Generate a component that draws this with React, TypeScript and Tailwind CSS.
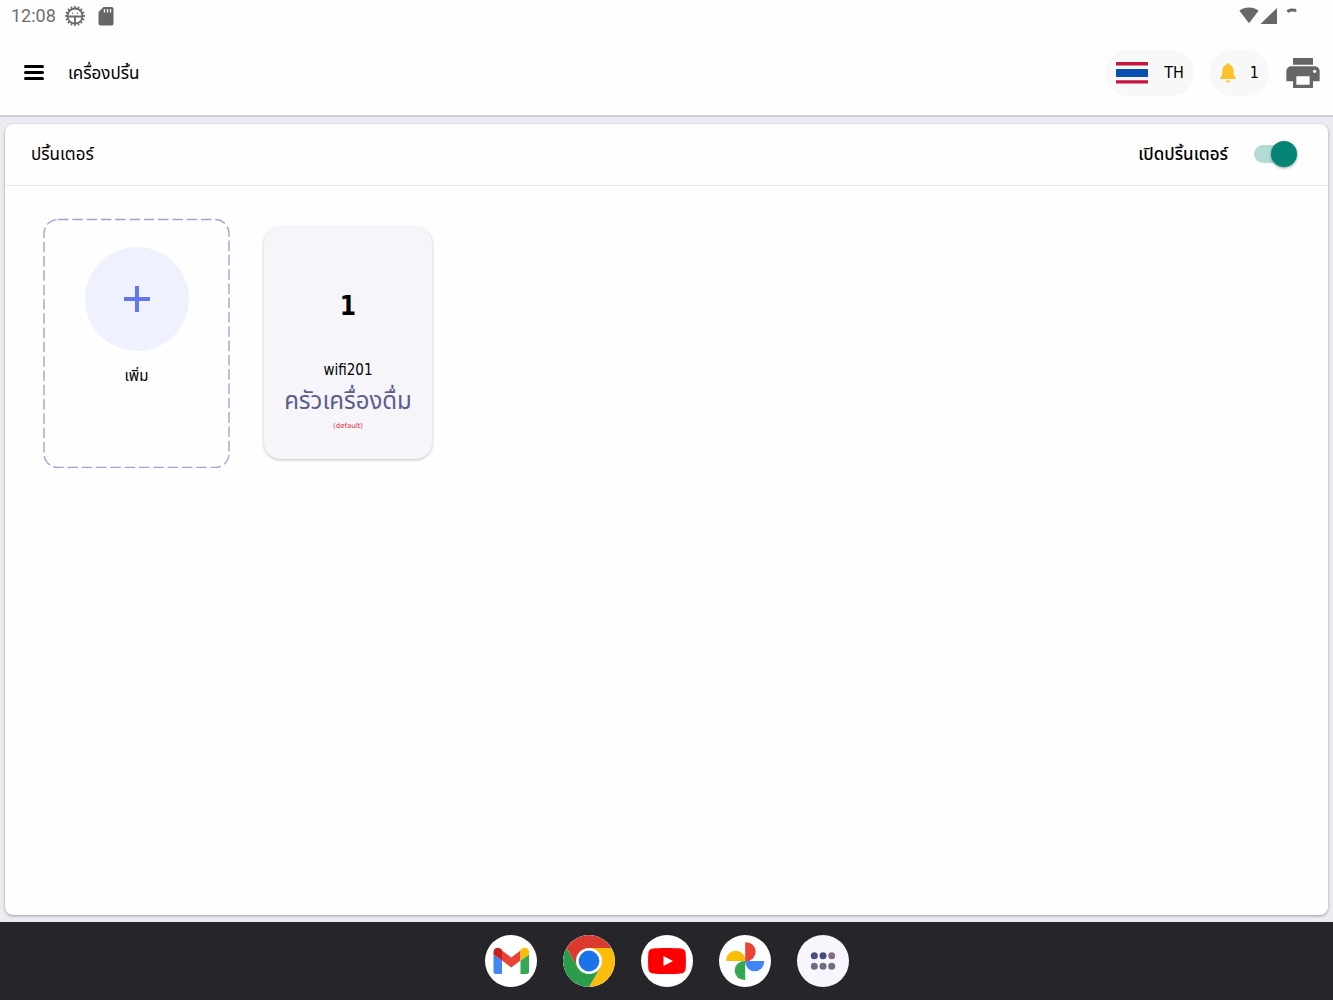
import React, { useState } from 'react';
import { MdPrint } from 'react-icons/md';

function DebugIcon() {
    const teeth = Array.from({ length: 16 }, (_, i) => i * 22.5);
    return (
        <svg viewBox="0 0 22 22" className="h-[22px] w-[22px]" fill="none" stroke="#6b6b6b">
            {teeth.map((angle) => (
                <path key={angle} d="M11 3.500V1" strokeWidth="1.700" transform={`rotate(${angle} 11 11)`} />
            ))}
            <circle cx="11" cy="11" r="7.500" strokeWidth="1.800" />
            <path d="M4 11.500h14M11 11.500v7" strokeWidth="1.800" />
            <circle cx="8.500" cy="8.300" r="0.700" fill="#6b6b6b" stroke="none" />
            <circle cx="13.500" cy="8.300" r="0.700" fill="#6b6b6b" stroke="none" />
        </svg>
    );
}

function SdCardIcon() {
    return (
        <svg viewBox="0 0 16 20" className="h-5 w-4">
            <path fill="#666" d="M5.500 1H13.500a2 2 0 0 1 2 2v14.500a2 2 0 0 1-2 2H2.500a2 2 0 0 1-2-2V6z" />
            <path stroke="#fff" strokeWidth="1.300" d="M6.500 3v3.500M9.500 3v3.500M12.500 3v3.500" />
        </svg>
    );
}

function SignalIcons() {
    return (
        <svg viewBox="0 0 60 20" className="h-5 w-[60px]" fill="#676767">
            <path d="M0.400 4.800C3.200 2.500 6.400 1.500 10 1.500s6.800 1 9.600 3.300L10 17.200z" />
            <path d="M38 2V18H21.500z" />
            <path d="M47.500 4.500c2.600-2 6-2.400 9.800-1.400v3c-3.200-.9-5.700-.7-8 1z" />
        </svg>
    );
}

function FlagIcon() {
    return (
        <svg viewBox="0 0 32 22" className="h-[22px] w-8" preserveAspectRatio="none">
            <path fill="#f6f7fa" d="M0 0h32v22H0z" />
            <path fill="#c8143c" d="M0 0h32v3.600H0zM0 18.200h32v3.300H0z" />
            <path fill="#0a50b0" d="M0 7h32v8H0z" />
        </svg>
    );
}

function BellIcon() {
    return (
        <svg viewBox="0 0 18 20" className="h-5 w-4" preserveAspectRatio="none" fill="#fcc22d">
            <path d="M9 0c.8 0 1.300.6 1.400 1.400 3.200.7 4.900 3.100 4.900 6.300 0 3.300.5 5 2.200 6.500v1.900H.5v-1.900c1.700-1.500 2.200-3.200 2.200-6.500 0-3.200 1.700-5.600 4.900-6.300C7.700.6 8.200 0 9 0z" />
            <path d="M6.500 17.400h5c-.4 1.300-1.300 2-2.500 2s-2.100-.7-2.500-2z" />
        </svg>
    );
}

function GmailIcon() {
    return (
        <svg viewBox="0 0 52 52" className="h-full w-full">
            <path fill="#4285f4" d="M8.500 19.500l8.500 6V39h-6a2.500 2.500 0 0 1-2.500-2.500z" />
            <path fill="#34a853" d="M44 19.500l-8.500 6V39h6a2.500 2.500 0 0 0 2.500-2.500z" />
            <path fill="#ea4335" d="M17 15.500l9.200 7 9.300-7v10l-9.300 7-9.200-7z" />
            <path fill="#c5221f" d="M8.500 17c0-3.700 4.200-5.400 7.200-3.200l1.300 1v10.700l-8.500-6z" />
            <path fill="#fbbc04" d="M44 17c0-3.700-4.200-5.400-7.200-3.200l-1.300 1v10.700l8.500-6z" />
        </svg>
    );
}

function ChromeIcon() {
    return (
        <svg viewBox="0 0 52 52" className="h-full w-full">
            <path fill="#da3b2f" d="M3.500 13A26 26 0 0 1 48.500 13H26L14.700 32.500z" />
            <path fill="#fbbc0c" d="M48.500 13A26 26 0 0 1 26 52l11.300-19.500L26 13z" />
            <path fill="#2a9d4a" d="M26 52A26 26 0 0 1 3.500 13l11.200 19.500L37.300 32.500z" />
            <circle cx="26" cy="26" r="13" fill="#fff" />
            <circle cx="26" cy="26" r="10.400" fill="#1a73e8" />
        </svg>
    );
}

function YoutubeIcon() {
    return (
        <svg viewBox="0 0 52 52" className="h-full w-full">
            <path fill="#f00" d="M12 13.500c6-.8 22-.8 28 0 3 .4 4.500 2 4.700 5 .3 4.600.3 10.400 0 15-.2 3-1.700 4.600-4.700 5-6 .8-22 .8-28 0-3-.4-4.500-2-4.700-5-.3-4.600-.3-10.400 0-15 .2-3 1.700-4.600 4.700-5z" />
            <path fill="#fff" d="M22.500 21l9.500 5-9.500 5z" />
        </svg>
    );
}

function PhotosIcon() {
    return (
        <svg viewBox="0 0 52 52" className="h-full w-full">
            <path fill="#ea4335" d="M26.200 7.200h1a9.500 9.500 0 0 1 0 19h-1z" />
            <path fill="#4285f4" d="M45.200 26v.8a9.500 9.500 0 0 1-19 0V26z" />
            <path fill="#34a853" d="M26.200 45h-1a9.500 9.500 0 0 1 0-19h1z" />
            <path fill="#fbbc04" d="M7.200 26v-.8a9.500 9.500 0 0 1 19 0v.8z" />
        </svg>
    );
}

function AppsIcon() {
    return (
        <svg viewBox="0 0 52 52" className="h-full w-full" fill="#706c82">
            <circle cx="17.300" cy="20.800" r="3.500" fill="#464d82" />
            <circle cx="26" cy="20.800" r="3.500" fill="#464d82" />
            <circle cx="34.700" cy="20.800" r="3.500" fill="#846c82" />
            <circle cx="17.300" cy="31.200" r="3.500" />
            <circle cx="26" cy="31.200" r="3.500" />
            <circle cx="34.700" cy="31.200" r="3.500" />
        </svg>
    );
}

const dockApps = [
    { name: 'Gmail', icon: <GmailIcon />, bg: 'bg-white' },
    { name: 'Chrome', icon: <ChromeIcon />, bg: 'bg-white' },
    { name: 'YouTube', icon: <YoutubeIcon />, bg: 'bg-white' },
    { name: 'Photos', icon: <PhotosIcon />, bg: 'bg-white' },
    { name: 'Apps', icon: <AppsIcon />, bg: 'bg-[#f8f5fd]' },
];

const printers = [{ id: 1, name: 'wifi201', room: 'ครัวเครื่องดื่ม', isDefault: true }];

export default function App() {
    const [enabled, setEnabled] = useState(true);

    return (
        <div className="flex min-h-screen flex-col bg-[#ebebf2] font-['Noto_Sans','Noto_Sans_Thai',sans-serif] text-black">
            {/* Status bar */}
            <div className="flex h-8 items-center justify-between bg-[#fefefe] pl-[11px] pr-[34px]">
                <div className="flex items-center text-[#707070]">
                    <span className="font-[Roboto,sans-serif] text-[18px] leading-8">12:08</span>
                    <span className="ml-2">
                        <DebugIcon />
                    </span>
                    <span className="ml-3">
                        <SdCardIcon />
                    </span>
                </div>
                <SignalIcons />
            </div>

            {/* Header */}
            <header className="flex h-[85px] items-center border-b-2 border-[#d0ced2] bg-[#fefefe] pb-0.5 pl-6 pr-2.5">
                <button aria-label="Menu" className="flex w-5 flex-col gap-[3px]">
                    <span className="h-[3px] rounded-full bg-black" />
                    <span className="h-[3px] rounded-full bg-black" />
                    <span className="h-[3px] rounded-full bg-black" />
                </button>
                <h1 className="ml-6 text-[17px] leading-6">เครื่องปริ้น</h1>
                <div className="ml-auto flex items-center">
                    <button className="flex h-[46px] items-center gap-4 rounded-[22px] bg-[#f8f8f9] px-2.5 text-base">
                        <FlagIcon />
                        <span className="font-['DejaVu_Sans_Condensed','DejaVu_Sans',sans-serif]">TH</span>
                    </button>
                    <button className="ml-4 flex h-[46px] items-center gap-3.5 rounded-[22px] bg-[#f8f8f9] px-2.5 text-base">
                        <BellIcon />
                        <span className="font-['DejaVu_Sans_Condensed','DejaVu_Sans',sans-serif]">1</span>
                    </button>
                    <button aria-label="Print" className="ml-3.5">
                        <MdPrint className="h-10 w-10 text-[#666]" />
                    </button>
                </div>
            </header>

            {/* Content */}
            <main className="mx-[5px] mb-[7px] mt-[7px] flex-1 rounded-lg bg-[#fefefe] shadow-[0_1px_3px_rgba(0,0,0,0.35)]">
                <div className="flex h-[62px] items-center justify-between border-b border-[#e9e9ed] pb-0.5 pl-[26px] pr-[31px]">
                    <h2 className="text-[17px] leading-6">ปริ้นเตอร์</h2>
                    <div className="flex items-center gap-[26px]">
                        <label htmlFor="printer-enabled" className="text-[17px] leading-6 font-medium">
                            เปิดปริ้นเตอร์
                        </label>
                        <input
                            id="printer-enabled"
                            type="checkbox"
                            checked={enabled}
                            onChange={(e) => setEnabled(e.target.checked)}
                            className="relative h-[18px] w-[43px] appearance-none rounded-full bg-gray-300 before:absolute before:-top-1 before:left-0 before:h-[26px] before:w-[26px] before:rounded-full before:bg-white before:shadow-[0_1px_3px_rgba(0,0,0,0.4)] checked:bg-[#b3dcd4] checked:before:left-auto checked:before:right-0 checked:before:bg-[#038474]"
                        />
                    </div>
                </div>

                <div className="flex flex-wrap items-center gap-[34px] px-[38px] py-8">
                    <button className="relative flex h-[250px] w-[187px] flex-col items-center pt-[29px]">
                        <svg className="absolute inset-0 h-full w-full" fill="none">
                            <rect
                                x="1"
                                y="1.500"
                                width="185"
                                height="248"
                                rx="14"
                                stroke="#a5a0d2"
                                strokeWidth="1.400"
                                strokeDasharray="10.500 3.800"
                            />
                        </svg>
                        <span className="flex h-[104px] w-[104px] items-center justify-center rounded-full bg-[#eff2fe]">
                            <svg viewBox="0 0 26 26" className="h-[26px] w-[26px]" stroke="#5f78ee" strokeWidth="4">
                                <path d="M0 13h26M13 0v26" />
                            </svg>
                        </span>
                        <span className="mt-3 text-[15px] leading-6">เพิ่ม</span>
                    </button>

                    {printers.map((printer) => (
                        <button
                            key={printer.id}
                            className="flex h-[232px] w-[168px] flex-col items-center rounded-2xl bg-[#f6f5fa] pt-[59px] shadow-[0_1px_3px_rgba(0,0,0,0.25)]"
                        >
                            <span className="font-['DejaVu_Sans_Condensed','DejaVu_Sans',sans-serif] text-[26px] leading-10 font-bold">
                                {printer.id}
                            </span>
                            <span className="mt-8 font-['DejaVu_Sans_Condensed','DejaVu_Sans',sans-serif] text-[15px] leading-6">
                                {printer.name}
                            </span>
                            <span className="text-2xl leading-9 text-[#5c5e8c]">{printer.room}</span>
                            {printer.isDefault && (
                                <span className="font-['DejaVu_Sans',sans-serif] text-[7px] leading-4 text-[#dc2f3c]">(default)</span>
                            )}
                        </button>
                    ))}
                </div>
            </main>

            {/* Dock */}
            <nav className="flex h-[78px] items-center justify-center gap-[26px] bg-[#262529]">
                {dockApps.map((app) => (
                    <button
                        key={app.name}
                        aria-label={app.name}
                        className={`h-[52px] w-[52px] overflow-hidden rounded-full ${app.bg}`}
                    >
                        {app.icon}
                    </button>
                ))}
            </nav>
        </div>
    );
}
